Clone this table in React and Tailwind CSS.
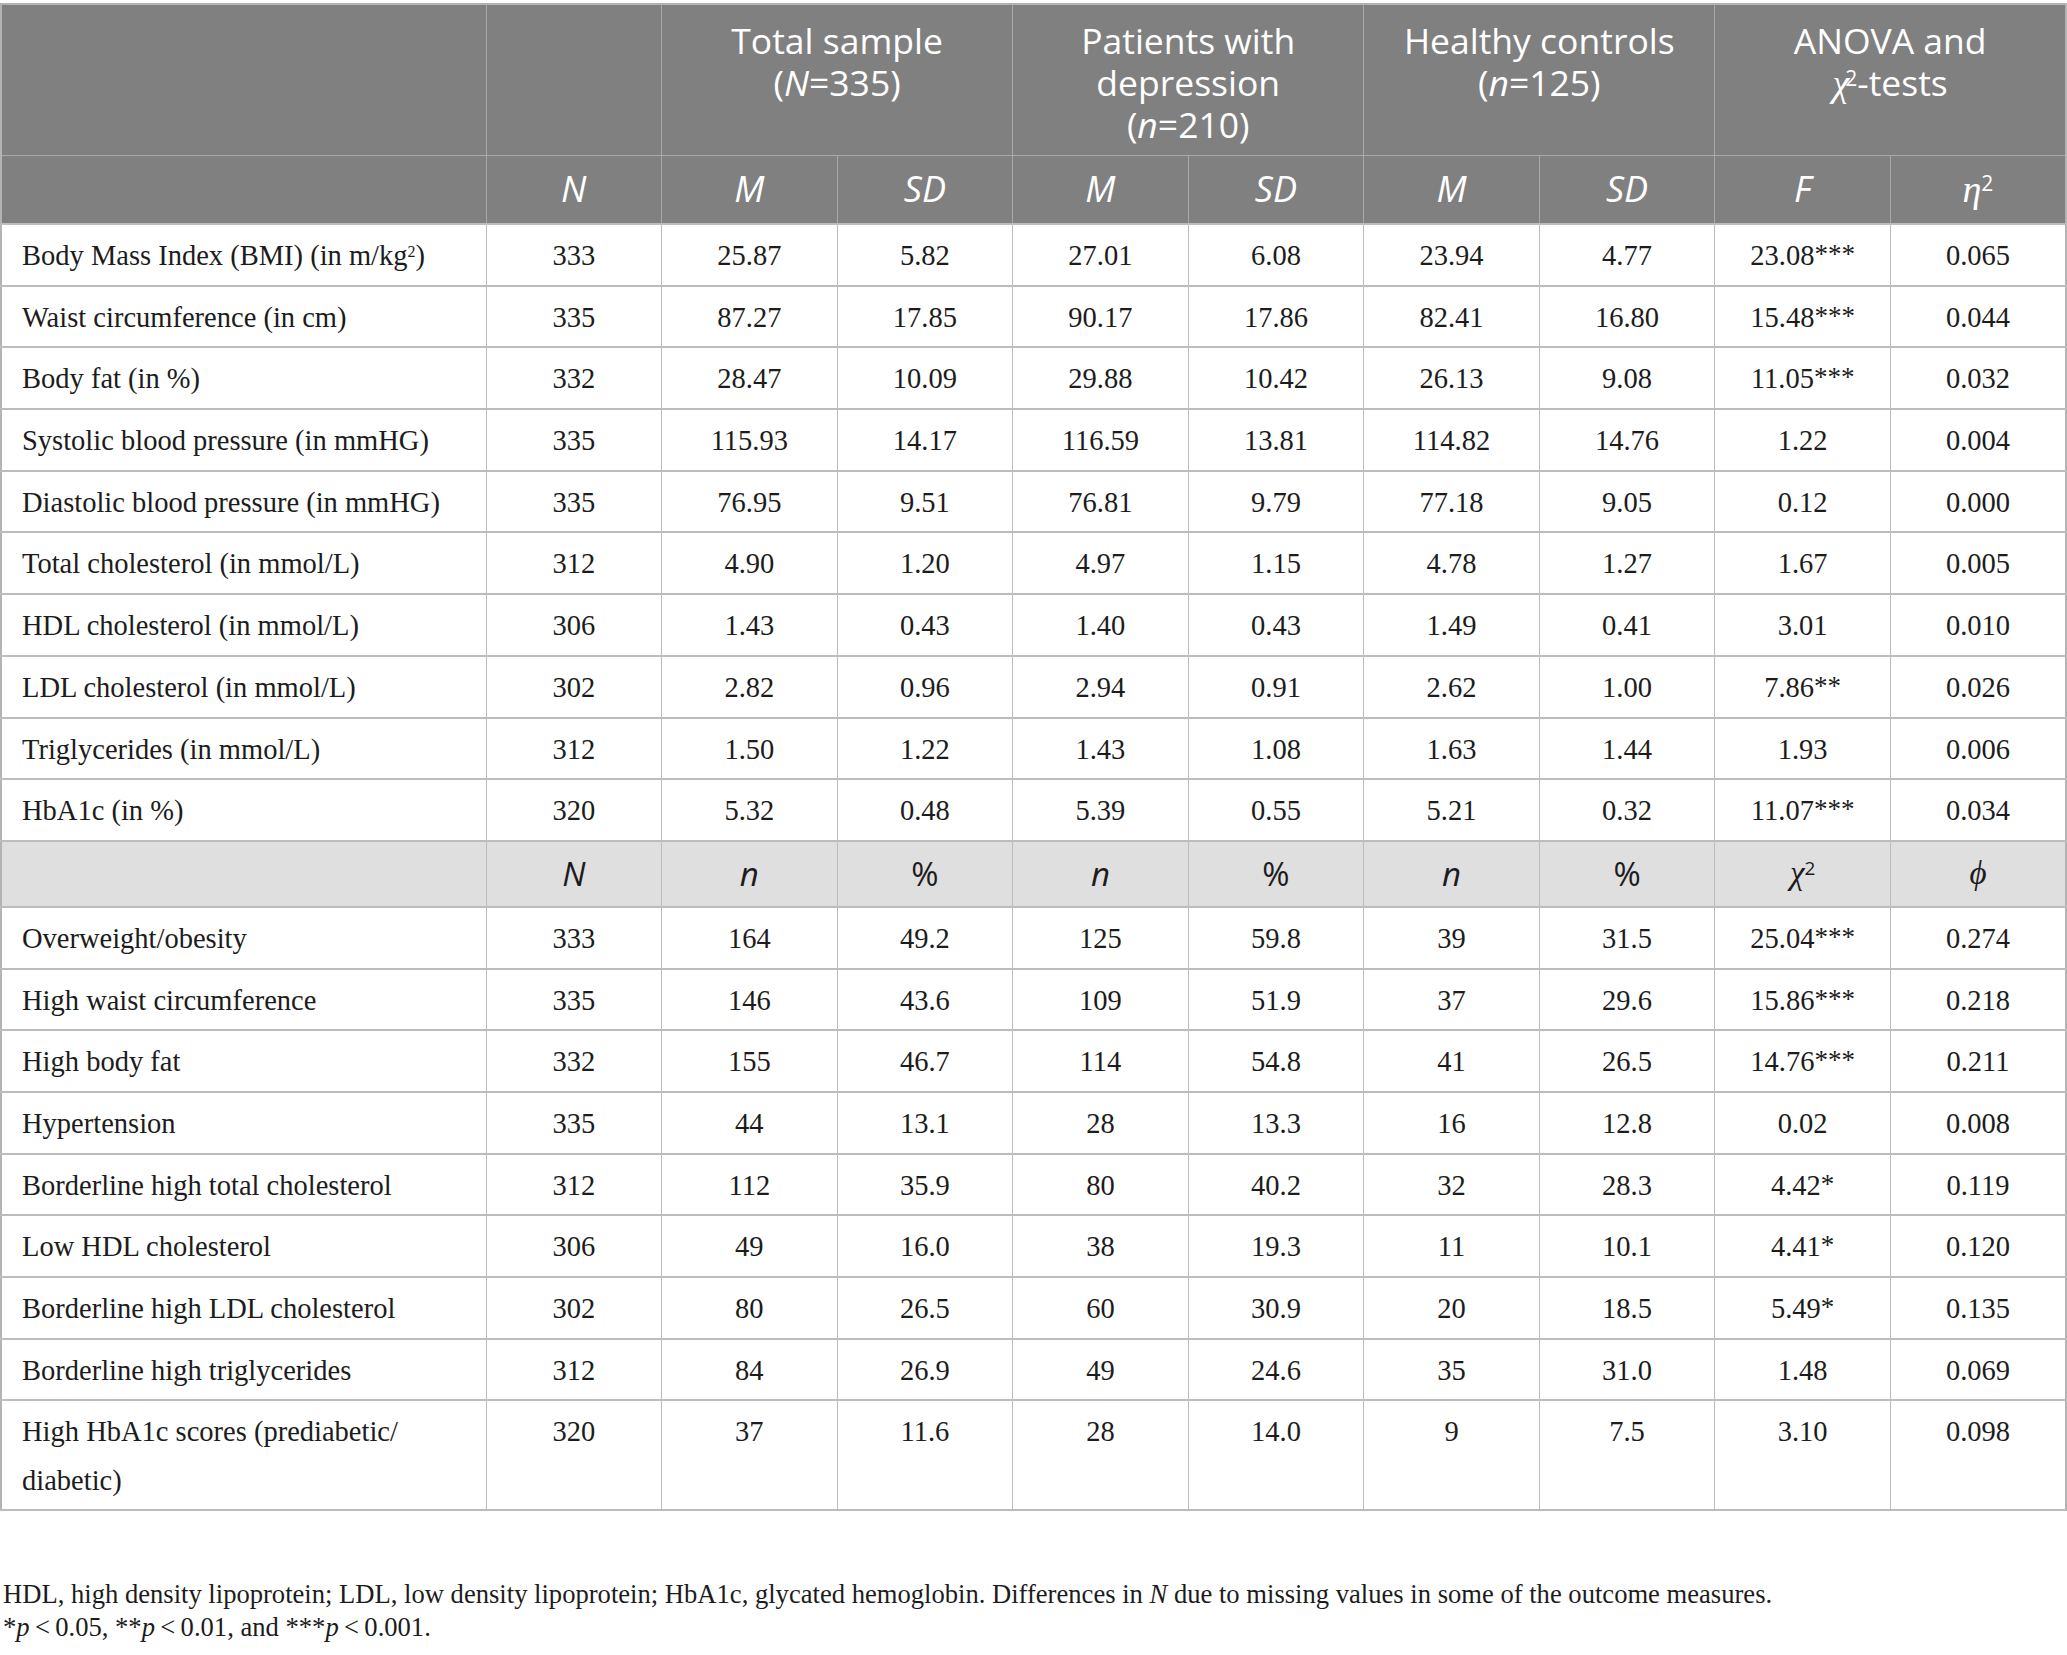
import React from "react";

const cont = [
  ["Body Mass Index (BMI) (in m/kg", "333", "25.87", "5.82", "27.01", "6.08", "23.94", "4.77", "23.08***", "0.065"],
  ["Waist circumference (in cm)", "335", "87.27", "17.85", "90.17", "17.86", "82.41", "16.80", "15.48***", "0.044"],
  ["Body fat (in %)", "332", "28.47", "10.09", "29.88", "10.42", "26.13", "9.08", "11.05***", "0.032"],
  ["Systolic blood pressure (in mmHG)", "335", "115.93", "14.17", "116.59", "13.81", "114.82", "14.76", "1.22", "0.004"],
  ["Diastolic blood pressure (in mmHG)", "335", "76.95", "9.51", "76.81", "9.79", "77.18", "9.05", "0.12", "0.000"],
  ["Total cholesterol (in mmol/L)", "312", "4.90", "1.20", "4.97", "1.15", "4.78", "1.27", "1.67", "0.005"],
  ["HDL cholesterol (in mmol/L)", "306", "1.43", "0.43", "1.40", "0.43", "1.49", "0.41", "3.01", "0.010"],
  ["LDL cholesterol (in mmol/L)", "302", "2.82", "0.96", "2.94", "0.91", "2.62", "1.00", "7.86**", "0.026"],
  ["Triglycerides (in mmol/L)", "312", "1.50", "1.22", "1.43", "1.08", "1.63", "1.44", "1.93", "0.006"],
  ["HbA1c (in %)", "320", "5.32", "0.48", "5.39", "0.55", "5.21", "0.32", "11.07***", "0.034"],
];

const cat = [
  ["Overweight/obesity", "333", "164", "49.2", "125", "59.8", "39", "31.5", "25.04***", "0.274"],
  ["High waist circumference", "335", "146", "43.6", "109", "51.9", "37", "29.6", "15.86***", "0.218"],
  ["High body fat", "332", "155", "46.7", "114", "54.8", "41", "26.5", "14.76***", "0.211"],
  ["Hypertension", "335", "44", "13.1", "28", "13.3", "16", "12.8", "0.02", "0.008"],
  ["Borderline high total cholesterol", "312", "112", "35.9", "80", "40.2", "32", "28.3", "4.42*", "0.119"],
  ["Low HDL cholesterol", "306", "49", "16.0", "38", "19.3", "11", "10.1", "4.41*", "0.120"],
  ["Borderline high LDL cholesterol", "302", "80", "26.5", "60", "30.9", "20", "18.5", "5.49*", "0.135"],
  ["Borderline high triglycerides", "312", "84", "26.9", "49", "24.6", "35", "31.0", "1.48", "0.069"],
];

const serif = "font-['Liberation_Serif',serif]";
const sans = "font-['Open_Sans',sans-serif]";

function Val({ v }) {
  const m = v.match(/^([^*]*)(\*+)$/);
  if (m) {
    return (
      <>
        {m[1]}
        <span className="text-[27px] relative -top-[2px]">{m[2]}</span>
      </>
    );
  }
  return v;
}

function BodyRow({ row, label, tall }) {
  return (
    <tr className={tall ? "h-[110px]" : "h-[61.7px]"}>
      <td className="border-y-2 border-x border-[#bcbcbc] pl-[20px] pr-2 align-top pt-[6px] leading-[49px] text-left">
        {label ?? row[0]}
      </td>
      {row.slice(1).map((v, i) => (
        <td
          key={i}
          className="border-y-2 border-x border-[#bcbcbc] align-top pt-[6px] leading-[49px] text-center"
        >
          <Val v={v} />
        </td>
      ))}
    </tr>
  );
}

export default function App() {
  const hcell = "border border-[#a8a8a8] text-white";
  const htop = `${hcell} align-top pt-[14px] text-[35.5px] leading-[42px] font-normal`;
  return (
    <div className="w-[2067px] bg-white pt-[3px] text-[#1c1c1c]">
      <table className={`w-[2067px] table-fixed border-collapse border-2 border-[#b3b3b3] ${serif} text-[28.5px]`}>
        <colgroup>
          <col className="w-[485px]" />
          <col /><col /><col /><col /><col /><col /><col /><col /><col />
        </colgroup>
        <thead className={`${sans} bg-[#7f807f]`}>
          <tr className="h-[151px]">
            <th className={hcell}></th>
            <th className={hcell}></th>
            <th colSpan={2} className={htop}>
              Total sample<br />(<i>N</i>=335)
            </th>
            <th colSpan={2} className={htop}>
              Patients with<br />depression<br />(<i>n</i>=210)
            </th>
            <th colSpan={2} className={htop}>
              Healthy controls<br />(<i>n</i>=125)
            </th>
            <th colSpan={2} className={htop}>
              ANOVA and<br />
              <i className={`${serif} text-[38px]`}>χ</i>
              <sup className="text-[21px] -ml-[4px]">2</sup>-tests
            </th>
          </tr>
          <tr className="h-[69px]">
            <th className={hcell}></th>
            {["N", "M", "SD", "M", "SD", "M", "SD", "F"].map((t, i) => (
              <th key={i} className={`${hcell} text-[36px] italic font-normal`}>{t}</th>
            ))}
            <th className={`${hcell} text-[36px] font-normal`}>
              <i className={`${serif} text-[38px]`}>η</i>
              <sup className="text-[21px]">2</sup>
            </th>
          </tr>
        </thead>
        <tbody>
          {cont.map((r, i) => (
            <BodyRow
              key={i}
              row={r}
              label={
                i === 0 ? (
                  <>
                    Body Mass Index (BMI) (in m/kg<sup className="text-[16px]">2</sup>)
                  </>
                ) : undefined
              }
            />
          ))}
          <tr className={`h-[66px] bg-[#e0dfe0] ${sans}`}>
            <td className="border-y-2 border-x border-[#bcbcbc]"></td>
            {["N", "n", "%", "n", "%", "n", "%"].map((t, i) => (
              <td key={i} className={`border-y-2 border-x border-[#bcbcbc] text-center text-[33px] ${t === "%" ? "" : "italic"}`}>
                {t}
              </td>
            ))}
            <td className="border-y-2 border-x border-[#bcbcbc] text-center">
              <i className={`${serif} text-[33px]`}>χ</i>
              <sup className="text-[19px]">2</sup>
            </td>
            <td className="border-y-2 border-x border-[#bcbcbc] text-center">
              <i className={`${serif} text-[33px]`}>ϕ</i>
            </td>
          </tr>
          {cat.map((r, i) => (
            <BodyRow key={i} row={r} />
          ))}
          <BodyRow
            tall
            row={["", "320", "37", "11.6", "28", "14.0", "9", "7.5", "3.10", "0.098"]}
            label={
              <>
                High HbA1c scores (prediabetic/
                <br />
                diabetic)
              </>
            }
          />
        </tbody>
      </table>
      <div className={`${serif} text-[26.6px] leading-[33px] mt-[67px] pl-[3px] pb-[20px]`}>
        <p>
          HDL, high density lipoprotein; LDL, low density lipoprotein; HbA1c, glycated hemoglobin. Differences in <i>N</i> due to missing values in some of the outcome measures.
        </p>
        <p>
          *<i>p</i>&thinsp;&lt;&thinsp;0.05, **<i>p</i>&thinsp;&lt;&thinsp;0.01, and ***<i>p</i>&thinsp;&lt;&thinsp;0.001.
        </p>
      </div>
    </div>
  );
}
